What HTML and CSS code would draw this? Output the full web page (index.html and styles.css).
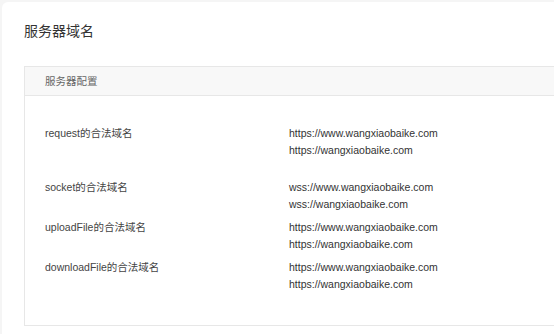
FILE: index.html
```html
<!DOCTYPE html>
<html lang="zh-CN">
<head>
  <meta charset="UTF-8">
  <meta name="viewport" content="width=device-width, initial-scale=1.0">
  <title>服务器域名</title>
  <link rel="stylesheet" href="styles.css">
</head>
<body>
  <div class="page-card">
    <h1 class="page-title">服务器域名</h1>
    <div class="config-panel">
      <div class="config-panel__head">服务器配置</div>
      <div class="config-panel__body">
        <div class="config-row config-row--first">
          <div class="config-row__label">request的合法域名</div>
          <div class="config-row__value">
            <div>https://www.wangxiaobaike.com</div>
            <div>https://wangxiaobaike.com</div>
          </div>
        </div>
        <div class="config-row">
          <div class="config-row__label">socket的合法域名</div>
          <div class="config-row__value">
            <div>wss://www.wangxiaobaike.com</div>
            <div>wss://wangxiaobaike.com</div>
          </div>
        </div>
        <div class="config-row">
          <div class="config-row__label">uploadFile的合法域名</div>
          <div class="config-row__value">
            <div>https://www.wangxiaobaike.com</div>
            <div>https://wangxiaobaike.com</div>
          </div>
        </div>
        <div class="config-row">
          <div class="config-row__label">downloadFile的合法域名</div>
          <div class="config-row__value">
            <div>https://www.wangxiaobaike.com</div>
            <div>https://wangxiaobaike.com</div>
          </div>
        </div>
      </div>
    </div>
  </div>
</body>
</html>
```

FILE: styles.css
```css
/* General styles */
html,
body {
  margin: 0;
  height: 100%;
}

body {
  background: #f5f5f5;
  font-family: "Liberation Sans", "Noto Sans CJK SC", sans-serif;
  color: #333;
  overflow: hidden;
}

.page-card {
  margin: 2px 0 0 2px;
  height: calc(100% - 2px);
  box-sizing: border-box;
  background: #fff;
  border-radius: 6px 0 0 0;
  padding: 19px 0 0 22px;
  overflow: hidden;
}

.page-title {
  font-size: 14px;
  font-weight: normal;
  line-height: 20px;
  margin: 0;
  color: #333;
}

.config-panel {
  margin-top: 25px;
  width: 600px;
  border: 1px solid #e7e7e7;
}

.config-panel__head {
  height: 28px;
  line-height: 28px;
  padding-left: 20px;
  background: #f8f8f8;
  border-bottom: 1px solid #e7e7e7;
  font-size: 10.5px;
  color: #666;
}

.config-panel__body {
  padding: 29px 0 32px 20px;
  font-size: 10.5px;
  line-height: 17px;
}

.config-row {
  display: grid;
  grid-template-columns: 244px 1fr;
  margin-top: 6px;
}

.config-row--first {
  margin-top: 0;
  margin-bottom: 20px;
}

.config-row__label {
  color: #444;
}
```
